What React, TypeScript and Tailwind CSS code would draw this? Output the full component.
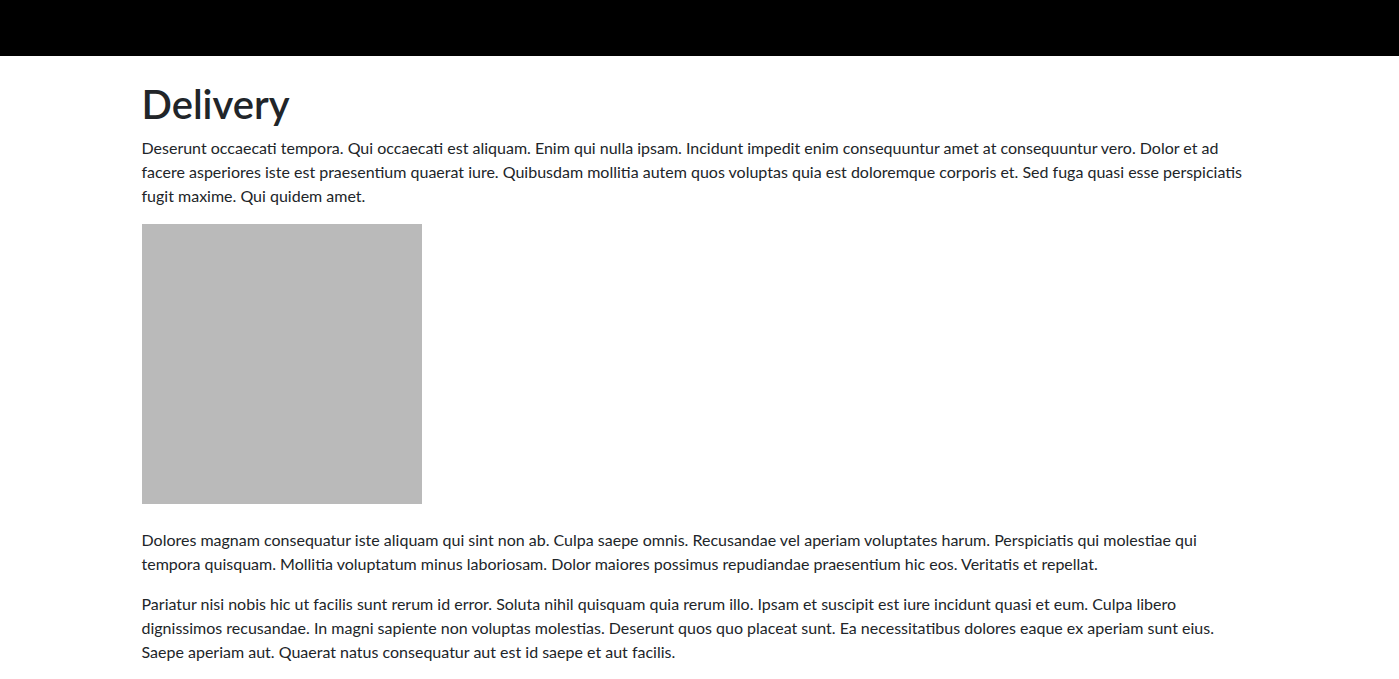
export default function App() {
  return (
    <div className="min-h-screen bg-white text-[#212529] font-['Lato','Noto_Sans',sans-serif]">
      <header className="h-14 bg-black" />
      <main className="mx-auto w-[1140px] px-3 pt-6">
        <h1 className="mb-2 text-[40px] font-semibold leading-[48px]">Delivery</h1>
        <p className="mb-4 text-base leading-6">
          Deserunt occaecati tempora. Qui occaecati est aliquam. Enim qui nulla ipsam. Incidunt impedit enim
          consequuntur amet at consequuntur vero. Dolor et ad facere asperiores iste est praesentium quaerat iure.
          Quibusdam mollitia autem quos voluptas quia est doloremque corporis et. Sed fuga quasi esse perspiciatis
          fugit maxime. Qui quidem amet.
        </p>
        <div className="mb-6 h-[280px] w-[280px] bg-[#bababa]" />
        <p className="mb-4 text-base leading-6">
          Dolores magnam consequatur iste aliquam qui sint non ab. Culpa saepe omnis. Recusandae vel aperiam
          voluptates harum. Perspiciatis qui molestiae qui tempora quisquam. Mollitia voluptatum minus laboriosam.
          Dolor maiores possimus repudiandae praesentium hic eos. Veritatis et repellat.
        </p>
        <p className="mb-4 text-base leading-6">
          Pariatur nisi nobis hic ut facilis sunt rerum id error. Soluta nihil quisquam quia rerum illo. Ipsam et
          suscipit est iure incidunt quasi et eum. Culpa libero dignissimos recusandae. In magni sapiente non
          voluptas molestias. Deserunt quos quo placeat sunt. Ea necessitatibus dolores eaque ex aperiam sunt eius.
          Saepe aperiam aut. Quaerat natus consequatur aut est id saepe et aut facilis.
        </p>
      </main>
    </div>
  );
}
